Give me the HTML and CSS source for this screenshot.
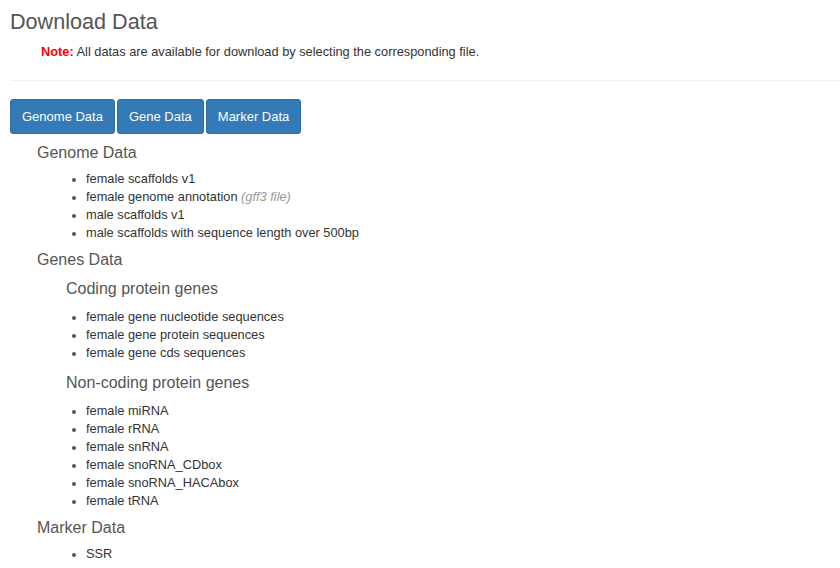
FILE: index.html
```html
<!DOCTYPE html>
<html>
<head>
<meta charset="utf-8">
<link rel="stylesheet" href="styles.css">
</head>
<body>
<div class="page">
  <h3 class="title">Download Data</h3>
  <p class="note"><span class="note-label">Note:</span> All datas are available for download by selecting the corresponding file.</p>
  <hr class="rule">
  <div class="tabs">
    <button class="btn">Genome Data</button>
    <button class="btn">Gene Data</button>
    <button class="btn">Marker Data</button>
  </div>
  <div class="section">
    <h4 class="sec-title sec-title-first">Genome Data</h4>
    <ul class="files">
      <li>female scaffolds v1</li>
      <li>female genome annotation <em class="hint">(gff3 file)</em></li>
      <li>male scaffolds v1</li>
      <li>male scaffolds with sequence length over 500bp</li>
    </ul>
    <h4 class="sec-title">Genes Data</h4>
    <div class="sub">
      <h4 class="sub-title">Coding protein genes</h4>
      <ul class="files sub-files">
        <li>female gene nucleotide sequences</li>
        <li>female gene protein sequences</li>
        <li>female gene cds sequences</li>
      </ul>
      <h4 class="sub-title sub-title-next">Non-coding protein genes</h4>
      <ul class="files sub-files">
        <li>female miRNA</li>
        <li>female rRNA</li>
        <li>female snRNA</li>
        <li>female snoRNA_CDbox</li>
        <li>female snoRNA_HACAbox</li>
        <li>female tRNA</li>
      </ul>
    </div>
    <h4 class="sec-title">Marker Data</h4>
    <ul class="files">
      <li>SSR</li>
    </ul>
  </div>
</div>
</body>
</html>
```

FILE: styles.css
```css
html, body {
  margin: 0;
  padding: 0;
  background: #fff;
}
body {
  font-family: "Liberation Sans", Arial, sans-serif;
  font-size: 12.8px;
  color: #333;
}
.page {
  padding: 0 0 0 10px;
}
.title {
  margin: 0;
  padding-top: 9px;
  font-size: 21.6px;
  font-weight: 400;
  line-height: 26px;
  color: #555;
}
.note {
  margin: 8px 0 0 31px;
  font-size: 12.8px;
  line-height: 18px;
  color: #333;
}
.note-label {
  color: #ff0000;
  font-weight: bold;
}
.rule {
  margin: 19px 0 0 0;
  border: 0;
  border-top: 1px solid #eee;
  height: 0;
}
.tabs {
  display: flex;
  gap: 2px;
  margin-top: 18px;
}
.btn {
  background: #337ab7;
  color: #fff;
  border: 1px solid #2e6da4;
  border-radius: 3px;
  font-family: "Liberation Sans", Arial, sans-serif;
  font-size: 13px;
  font-weight: 400;
  height: 35px;
  padding: 0 11px;
  cursor: pointer;
}
.section {
  padding-left: 27px;
}
.sec-title {
  margin: 8px 0 0 0;
  font-size: 16px;
  font-weight: 400;
  line-height: 20px;
  color: #555;
}
.sec-title-first {
  margin-top: 9px;
}
.files {
  margin: 7px 0 0 0;
  padding-left: 49px;
  list-style: disc;
}
.files li {
  line-height: 18px;
}
.files li::marker {
  color: #555;
  font-size: 12px;
}
.sub {
  padding-left: 29px;
}
.sub-title {
  margin: 9px 0 0 0;
  font-size: 16px;
  font-weight: 400;
  line-height: 20px;
  color: #555;
}
.sub-title-next {
  margin-top: 11px;
}
.sub-files {
  margin-top: 9px;
  padding-left: 20px;
}
.hint {
  color: #999;
}
```
